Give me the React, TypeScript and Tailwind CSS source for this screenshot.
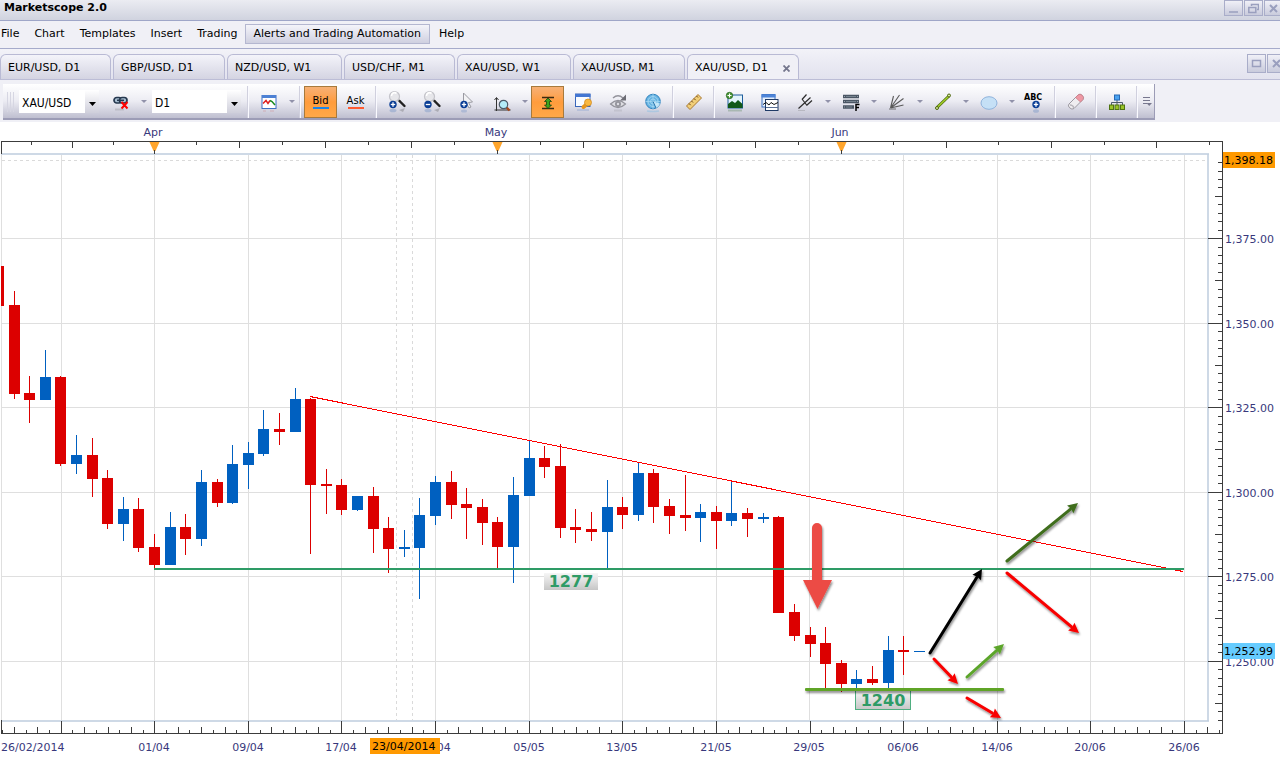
import { useState, type ReactNode } from "react";

type Candle = {
  high: number;
  low: number;
  top: number;
  bottom: number;
  up: boolean;
};

const c = (high: number, low: number, top: number, bottom: number, up = false): Candle => ({
  high,
  low,
  top,
  bottom,
  up,
});

const candles: Candle[] = [
  c(266, 306, 266, 306),
  c(291, 399, 305, 394),
  c(376, 423, 393, 400),
  c(350, 400, 377, 400, true),
  c(376, 466, 377, 464),
  c(435, 474, 455, 464, true),
  c(438, 497, 455, 479),
  c(470, 529, 478, 524),
  c(497, 541, 509, 524, true),
  c(498, 552, 509, 548),
  c(534, 569, 547, 565),
  c(512, 565, 527, 565, true),
  c(514, 555, 527, 539),
  c(470, 546, 482, 539, true),
  c(479, 507, 482, 503),
  c(445, 504, 464, 503, true),
  c(442, 489, 453, 465, true),
  c(410, 456, 429, 454, true),
  c(413, 445, 429, 432),
  c(388, 432, 399, 432, true),
  c(398, 554, 399, 485),
  c(469, 514, 484, 486),
  c(479, 515, 485, 510),
  c(496, 511, 496, 510, true),
  c(487, 553, 496, 529),
  c(517, 573, 528, 549),
  c(530, 557, 547, 549, true),
  c(498, 599, 515, 548, true),
  c(476, 525, 482, 516, true),
  c(471, 519, 482, 505),
  c(488, 539, 504, 508),
  c(499, 545, 507, 523),
  c(517, 568, 522, 547),
  c(477, 583, 495, 547, true),
  c(440, 496, 458, 496, true),
  c(446, 478, 458, 467),
  c(444, 538, 466, 528),
  c(509, 543, 527, 530),
  c(512, 541, 529, 532),
  c(480, 568, 507, 532, true),
  c(497, 529, 507, 515),
  c(463, 521, 473, 515, true),
  c(469, 523, 473, 507),
  c(499, 534, 506, 516),
  c(475, 531, 515, 518),
  c(504, 542, 512, 518, true),
  c(506, 549, 512, 521),
  c(481, 526, 513, 521, true),
  c(508, 537, 513, 519),
  c(513, 523, 517, 519, true),
  c(516, 613, 517, 613),
  c(604, 641, 612, 636),
  c(627, 657, 635, 644),
  c(627, 690, 643, 664),
  c(660, 692, 663, 684),
  c(670, 688, 679, 684, true),
  c(666, 685, 679, 683),
  c(636, 688, 650, 683, true),
  c(636, 675, 650, 652),
  c(651, 652, 651, 652, true),
];

const barX = (i: number) => Math.round(-1.95 + 15.605 * i);

const dates = [
  { x: 154, text: "01/04" },
  { x: 248, text: "09/04" },
  { x: 341, text: "17/04" },
  { x: 435, text: "25/04" },
  { x: 529, text: "05/05" },
  { x: 622, text: "13/05" },
  { x: 716, text: "21/05" },
  { x: 809, text: "29/05" },
  { x: 903, text: "06/06" },
  { x: 997, text: "14/06" },
  { x: 1090, text: "20/06" },
  { x: 1184, text: "26/06" },
];

const prices = [
  { y: 238, text: "1,375.00" },
  { y: 323, text: "1,350.00" },
  { y: 407, text: "1,325.00" },
  { y: 492, text: "1,300.00" },
  { y: 576, text: "1,275.00" },
  { y: 661, text: "1,250.00" },
];

const months = [
  { x: 154, text: "Apr" },
  { x: 497, text: "May" },
  { x: 841, text: "Jun" },
];

const topSmall = [31, 113, 196, 282, 368, 454, 540, 626, 712, 798, 893, 998, 1104, 1209];
const topMedium = [72, 239, 325, 411, 583, 669, 755, 946, 1051, 1156];

const tabs = [
  { name: "EUR/USD, D1", width: "w-[111px]" },
  { name: "GBP/USD, D1", width: "w-[112px]" },
  { name: "NZD/USD, W1", width: "w-[115px]" },
  { name: "USD/CHF, M1", width: "w-[111px]" },
  { name: "XAU/USD, W1", width: "w-[114px]" },
  { name: "XAU/USD, M1", width: "w-[112px]" },
  { name: "XAU/USD, D1", width: "w-[112px]" },
];

const menu = ["File", "Chart", "Templates", "Insert", "Trading", "Alerts and Trading Automation", "Help"];

/* ---------- toolbar ---------- */

function Icon({ children }: { children: ReactNode }) {
  return (
    <svg width="24" height="24" viewBox="0 0 24 24" fill="none" className="shrink-0">
      {children}
    </svg>
  );
}

function Tool({ label, active, children }: { label: string; active?: boolean; children: ReactNode }) {
  return (
    <button
      type="button"
      aria-label={label}
      aria-pressed={active}
      className={
        active
          ? "mx-px flex h-8 w-[33px] shrink-0 flex-col items-center justify-center border border-[#a87a3c] bg-linear-to-b from-[#f6b074] via-[#ff9c3c] to-[#ffa848]"
          : "flex h-8 w-[35px] shrink-0 flex-col items-center justify-center"
      }
    >
      {children}
    </button>
  );
}

function Caret({ label }: { label: string }) {
  return (
    <button type="button" aria-label={label} className="flex h-8 w-[11px] shrink-0 items-center justify-center">
      <svg width="6" height="3" viewBox="0 0 6 3">
        <path d="M0 0h6L3 3z" fill="#9192aa" />
      </svg>
    </button>
  );
}

function Divider() {
  return (
    <div className="flex h-full w-1.5 shrink-0 justify-center">
      <div className="w-px bg-[#d0d0de]" />
      <div className="w-px bg-[#fafaff]" />
    </div>
  );
}

function Combo({ label, value, options, width }: { label: string; value: string; options: string[]; width: string }) {
  return (
    <div className={"relative h-[23px] shrink-0 bg-white " + width}>
      <select
        aria-label={label}
        defaultValue={value}
        className="h-full w-full appearance-none bg-transparent pl-[3px] font-['DejaVu_Sans_Condensed','DejaVu_Sans',sans-serif] text-[12px] leading-[15px] text-black"
      >
        {options.map((o) => (
          <option key={o}>{o}</option>
        ))}
      </select>
      <span className="pointer-events-none absolute inset-y-0 right-0 flex w-3.5 items-center justify-center bg-linear-to-b from-white to-[#cfcfdb]">
        <svg width="7" height="4" viewBox="0 0 7 4" className="mt-1">
          <path d="M0 0h7L3.5 4z" fill="#000" />
        </svg>
      </span>
    </div>
  );
}

function Badge({ x, y, minus }: { x: number; y: number; minus?: boolean }) {
  return (
    <g>
      <circle cx={x} cy={y} r="3.7" fill="#0c3f96" />
      <path d={`M${x - 2.2} ${y}h4.4`} stroke="#fff" strokeWidth="1.3" />
      {!minus && <path d={`M${x} ${y - 2.2}v4.4`} stroke="#fff" strokeWidth="1.3" />}
    </g>
  );
}

function ZoomIcon({ minus }: { minus?: boolean }) {
  return (
    <Icon>
      <ellipse cx="8" cy="20.5" rx="3.5" ry="1.8" fill="#6f8fc4" opacity=".4" />
      <path d="M14 20l6-2-2 4z" fill="#555" opacity=".3" />
      <path d="M12.5 9.5l3 2" stroke="#aaa" strokeWidth="2.4" />
      <path d="M14.5 11l5 5" stroke="#222" strokeWidth="2.4" strokeLinecap="round" />
      <circle cx="9.5" cy="6.5" r="5" fill="#e6e6ea" stroke="#c4c4ca" strokeWidth="1.2" />
      <path d="M6.5 6a3 3 0 0 1 5-2.500" stroke="#fff" strokeWidth="1.6" />
      <Badge x={8} y={14.5} minus={minus} />
    </Icon>
  );
}

function Toolbar() {
  return (
    <div
      role="toolbar"
      className="flex h-9 w-[1152px] shrink-0 items-center border-r border-b-2 border-[#9c9cb6] bg-linear-to-b from-white via-[#ececf3] to-[#bfbfd0] pt-0.5"
    >
      <div className="mr-[5px] ml-1 flex h-5 w-[7px] shrink-0 justify-between">
        <div className="w-px bg-[#d6d6e2]" />
        <div className="w-px bg-[#d6d6e2]" />
        <div className="w-px bg-[#d6d6e2]" />
      </div>
      <Combo label="Symbol" value="XAU/USD" options={["XAU/USD", "EUR/USD", "GBP/USD"]} width="mr-1 w-20" />
      <Tool label="Unlink symbol">
        <Icon>
          <rect x="5" y="7.5" width="7.500" height="5.500" rx="2.700" fill="#a9bfd2" stroke="#26384f" strokeWidth="1.700" />
          <rect x="10.500" y="7.500" width="7.500" height="5.500" rx="2.700" fill="#a9bfd2" stroke="#26384f" strokeWidth="1.700" />
          <path d="M8 10.300h7" stroke="#26384f" strokeWidth="1.500" />
          <path d="M6 19.500h9" stroke="#777" strokeWidth="2" opacity=".25" />
          <path d="M12.500 12l6 6.500M18.500 12l-6 6.500" stroke="#f00" strokeWidth="2" />
        </Icon>
      </Tool>
      <Caret label="Link options" />
      <Combo label="Period" value="D1" options={["D1", "W1", "M1"]} width="mr-1 ml-[3px] w-[89px]" />
      <Divider />
      <Tool label="Chart type">
        <Icon>
          <rect x="5" y="5.500" width="14" height="13" fill="#fff" stroke="#3c6fc4" />
          <path d="M5 6.500h14" stroke="#4c80d4" strokeWidth="3" />
          <path d="M6 13.500l3-3 2 3 2-3" stroke="#e02020" strokeWidth="1.500" />
          <path d="M13 10.500l2 1 3 3.500" stroke="#168a1c" strokeWidth="1.500" />
          <path d="M6 21h3M13 21h4" stroke="#c66" opacity=".35" />
        </Icon>
      </Tool>
      <Caret label="Chart types" />
      <Divider />
      <Tool label="Bid" active>
        <span className="text-[10px] leading-[12px] text-black">Bid</span>
        <span className="h-0.5 w-4 bg-[#1a85e8]" />
      </Tool>
      <Tool label="Ask">
        <span className="text-[10px] leading-[12px] text-black">Ask</span>
        <span className="h-0.5 w-4 bg-[#ff5a30]" />
      </Tool>
      <Divider />
      <Tool label="Zoom in">
        <ZoomIcon />
      </Tool>
      <Tool label="Zoom out">
        <ZoomIcon minus />
      </Tool>
      <Tool label="Cursor">
        <Icon>
          <path d="M8.500 3l9 9-4 .500 2.500 4.500-2 1-2.500-4.500-3 2.500z" fill="#f2f2f4" stroke="#9a9aa2" />
          <Badge x={9} y={14.500} />
          <ellipse cx="9" cy="21" rx="3" ry="1.500" fill="#6f8fc4" opacity=".35" />
        </Icon>
      </Tool>
      <Tool label="Zoom area">
        <Icon>
          <path d="M6.500 8v13M4.500 10L6.500 7.500 8.500 10M4.500 20h16" stroke="#333" />
          <path d="M16.500 17.500l3 3" stroke="#a8481c" strokeWidth="2.400" />
          <circle cx="13.500" cy="14.500" r="4.200" fill="#b4ecf8" stroke="#4c5a68" strokeWidth="1.200" />
        </Icon>
      </Tool>
      <Caret label="Zoom modes" />
      <Tool label="Auto scale" active>
        <Icon>
          <path d="M6 7.500h12M6 18.500h12" stroke="#3c2a10" strokeWidth="1.400" />
          <path d="M12 8l3.500 3.500h-2v3.500h2L12 18.500 8.500 15h2v-3.500h-2z" fill="#3aa51c" stroke="#17440c" strokeWidth=".8" />
        </Icon>
      </Tool>
      <Tool label="Chart properties">
        <Icon>
          <rect x="4.500" y="4" width="14.500" height="12.500" fill="#f8fbff" stroke="#3a66ba" />
          <path d="M4 5.500h15.500" stroke="#4376d2" strokeWidth="3" />
          <path d="M6 20h12" stroke="#8fa4cf" strokeWidth="2" opacity=".4" />
          <path d="M12.500 17l3-2.500" stroke="#e8961c" strokeWidth="4" strokeLinecap="round" />
          <circle cx="17" cy="12.500" r="3.500" fill="#f9b840" stroke="#d08a20" strokeWidth=".8" />
        </Icon>
      </Tool>
      <Tool label="Refresh view">
        <Icon>
          <path d="M4.500 14q7.500-7 15 0q-7.500 7-15 0z" fill="#dcdce1" stroke="#93939b" strokeWidth="1.200" />
          <circle cx="12" cy="14" r="3" fill="#94949c" />
          <circle cx="12" cy="14" r="1.200" fill="#dedee4" />
          <path d="M7 8q5-4.500 10 0" stroke="#93939b" strokeWidth="1.400" />
          <path d="M20 4.500v6h-6z" fill="#6c6c74" />
          <path d="M8 20.500h8" stroke="#93939b" strokeWidth="2" opacity=".25" />
        </Icon>
      </Tool>
      <Tool label="Market data">
        <Icon>
          <circle cx="12" cy="11.500" r="7.300" fill="#67b3e2" stroke="#3385bf" />
          <circle cx="12" cy="11.500" r="5" stroke="#a9daf3" strokeWidth=".8" />
          <circle cx="12" cy="11.500" r="2.500" stroke="#a9daf3" strokeWidth=".8" />
          <path d="M12 4v15M4.500 11.500h15" stroke="#a9daf3" strokeWidth=".7" />
          <path d="M12 11.500l7 2a7.300 7.300 0 0 1-4 5z" fill="#d6effb" opacity=".8" />
          <path d="M12 11.500l3 6.500" stroke="#2471aa" />
          <path d="M6 21q6 1 12 0" stroke="#6db6e4" strokeWidth="1.500" opacity=".35" />
        </Icon>
      </Tool>
      <Divider />
      <Tool label="Ruler">
        <Icon>
          <path d="M4.500 16L16 4.500l3.500 3.500L8 19.500z" fill="#f2cf78" stroke="#a87830" />
          <path d="M7 13.500l1.700 1.700M9.500 11l1.500 1.500M12 8.500l1.700 1.700M14.500 6l1.500 1.500" stroke="#6a4614" />
        </Icon>
      </Tool>
      <Divider />
      <Tool label="Add image">
        <Icon>
          <rect x="5" y="5" width="14.500" height="13" fill="#e4f4fb" stroke="#1d5d9c" />
          <path d="M5 18v-4l4-3 3 2 3-3 4.500 4v4z" fill="#125818" />
          <circle cx="6.500" cy="5.500" r="3.200" fill="#4f9a3c" stroke="#1d5d18" strokeWidth=".7" />
          <path d="M4.500 5.500h4M6.500 3.500v4" stroke="#fff" />
          <path d="M5 20.500h14" stroke="#4a7a4a" strokeWidth="2" opacity=".3" />
        </Icon>
      </Tool>
      <Tool label="Add indicator">
        <Icon>
          <rect x="4" y="4.500" width="13" height="12.500" fill="#e6effb" stroke="#3d72c4" />
          <path d="M3.500 6h14" stroke="#4d84d8" strokeWidth="3" />
          <rect x="7.500" y="9.500" width="12.500" height="11" fill="#fff" stroke="#1f3a66" />
          <path d="M5 14.500l3-2 3 2.500 2-2.500 3 2 4-2" stroke="#111" />
          <path d="M8 17.500h12" stroke="#5a6f94" />
        </Icon>
      </Tool>
      <Tool label="Pitchfork">
        <Icon>
          <path d="M5.500 18.500l12-11M9 9.500l4.500-5M13.500 15.500l5.500-5M9 9l5 6.500" stroke="#2c2c2c" strokeWidth="1.200" />
          <path d="M5 20.500h7" stroke="#888" opacity=".35" />
        </Icon>
      </Tool>
      <Caret label="Pitchforks" />
      <Tool label="Fibonacci">
        <Icon>
          <path d="M4 6.500h16M4 11.500h16M4 17h11" stroke="#4a5664" strokeWidth="3.400" />
          <path d="M5 6.500h14M5 11.500h14M5 17h9" stroke="#aeb8c2" strokeWidth=".8" strokeDasharray="1 12" />
          <path d="M7 6.500h10M7 11.500h10M7 17h6" stroke="#8a96a2" strokeWidth=".7" />
          <path d="M17 21v-6.500h3.500M17 17.500h3" stroke="#000" strokeWidth="1.500" />
        </Icon>
      </Tool>
      <Caret label="Fibonacci tools" />
      <Tool label="Fan">
        <Icon>
          <path d="M5.500 18L8.500 6M5.500 18l9-13M5.500 18L18.500 8.500M5.500 18l13-3" stroke="#5a5a5a" strokeWidth="1.100" />
          <path d="M4 19h7" stroke="#555" strokeWidth="2" opacity=".4" />
        </Icon>
      </Tool>
      <Caret label="Fans" />
      <Tool label="Line">
        <Icon>
          <path d="M6 17.500L18 6" stroke="#4d6a10" strokeWidth="3" />
          <path d="M6 17.500L18 6" stroke="#a0cc28" strokeWidth="1.700" />
          <circle cx="6" cy="18" r="1.500" fill="#d8eea0" stroke="#4d6410" />
          <circle cx="18" cy="5.500" r="1.500" fill="#d8eea0" stroke="#4d6410" />
        </Icon>
      </Tool>
      <Caret label="Lines" />
      <Tool label="Ellipse">
        <Icon>
          <ellipse cx="12" cy="13" rx="8" ry="6.300" fill="#c5e0f6" stroke="#8fb3dc" />
        </Icon>
      </Tool>
      <Caret label="Shapes" />
      <Tool label="Text label">
        <Icon>
          <text x="1" y="10" fontSize="8" fontWeight="bold" fill="#000">
            ABC
          </text>
          <Badge x={13} y={14.500} />
          <ellipse cx="13" cy="21" rx="3" ry="1.800" fill="#6f8fc4" opacity=".4" />
        </Icon>
      </Tool>
      <Divider />
      <Tool label="Eraser">
        <Icon>
          <path d="M5 14L14 5q2-1.800 4.200.3t.8 4.200L10 18.500q-2 1.500-4.300-.6T5 14z" fill="#efedf0" stroke="#9a979f" />
          <path d="M11.500 7.500L14 5q2-1.800 4.200.3t.8 4.200L16.500 12z" fill="#ee98a4" stroke="#c87884" strokeWidth=".7" />
          <path d="M6 15q3 0 4 3" stroke="#b8b5bc" strokeWidth="1.500" />
        </Icon>
      </Tool>
      <Divider />
      <Tool label="Object tree">
        <Icon>
          <path d="M12 8v5M6.500 16v-3.500h11V16M12 12v4" stroke="#4c5b6b" />
          <rect x="9.500" y="5" width="5" height="5" fill="#4aa2f0" stroke="#2668b4" />
          <rect x="4.500" y="15" width="4" height="4.500" fill="#9ac428" stroke="#4f7410" />
          <rect x="10" y="15" width="4" height="4.500" fill="#9ac428" stroke="#4f7410" />
          <rect x="15.500" y="15" width="4" height="4.500" fill="#9ac428" stroke="#4f7410" />
        </Icon>
      </Tool>
      <Divider />
      <button type="button" aria-label="Toolbar options" className="flex h-8 flex-1 items-center justify-center">
        <svg width="9" height="9" viewBox="0 0 9 9">
          <path d="M0 .5h7M0 3.500h7M0 6.500h4" stroke="#77778e" />
          <path d="M3.500 6H9L6.200 9z" fill="#77778e" />
        </svg>
      </button>
    </div>
  );
}

/* ---------- window chrome ---------- */

function WindowButton({ label, children }: { label: string; children: ReactNode }) {
  return (
    <button
      type="button"
      aria-label={label}
      className="flex h-full w-[19px] shrink-0 items-center justify-center border border-[#a9adc9] bg-linear-to-b from-[#f0f0f7] to-[#c9cbdc]"
    >
      <svg width="11" height="11" viewBox="0 0 11 11" fill="none" stroke="#9a9fbe" strokeWidth="1.500">
        {children}
      </svg>
    </button>
  );
}

function Header() {
  const [active, setActive] = useState(6);
  return (
    <header className="bg-[#f0f0f6]">
      <div className="flex h-[21px] justify-between overflow-hidden border-b border-[#9fa6c8] bg-linear-to-b from-[#ebecf2] to-[#d0d3df]">
        <h1 className="pl-1 text-[11px] leading-[15px] font-bold text-black">Marketscope 2.0</h1>
        <div className="-mr-[3px] flex h-4 gap-px">
          <WindowButton label="Minimize">
            <path d="M1 9h9" />
          </WindowButton>
          <WindowButton label="Restore">
            <path d="M3.500 3V1.500h7v5H9M.8 4.500h7v5h-7z" />
          </WindowButton>
          <WindowButton label="Close">
            <path d="M2 2l7 7M9 2L2 9" strokeWidth="2" />
          </WindowButton>
        </div>
      </div>
      <nav className="flex h-7 items-center gap-[3px] border-b border-[#a6abcb] pb-0.5">
        {menu.map((item) => (
          <button
            key={item}
            type="button"
            className={
              item.startsWith("Alerts")
                ? "-ml-0.5 h-5 border border-[#b4b7d0] bg-linear-to-b from-[#f4f4fa] to-[#cfd0e0] px-2 text-[11px] leading-[14px] text-black"
                : "h-5 px-1.5 text-[11px] leading-[14px] text-black first:pl-px"
            }
          >
            {item}
          </button>
        ))}
      </nav>
      <div className="flex h-[31px] justify-between overflow-hidden border-b border-[#bcbdd6] bg-linear-to-b from-[#f2f2f8] to-[#e2e2ee]">
        <div role="tablist" className="flex items-end gap-0.5">
          {tabs.map((t, i) => (
            <div
              key={t.name}
              className={
                (i === active
                  ? "-mb-px h-[26px] bg-[#f0f0f6] "
                  : "h-[25px] bg-linear-to-b from-[#f4f4fa] to-[#d4d4e2] ") +
                "flex items-center rounded-t-md border border-b-0 border-[#b9bad4] pt-px pl-[7px] " +
                t.width
              }
            >
              <button
                type="button"
                role="tab"
                aria-selected={i === active}
                onClick={() => setActive(i)}
                className="text-[11px] leading-[14px] whitespace-nowrap text-black"
              >
                {t.name}
              </button>
              {i === active && (
                <button type="button" aria-label="Close tab" className="mr-1 ml-auto p-1">
                  <svg width="7" height="7" viewBox="0 0 7 7" stroke="#74768c" strokeWidth="1.800">
                    <path d="M.5.5l6 6M6.500.5l-6 6" />
                  </svg>
                </button>
              )}
            </div>
          ))}
        </div>
        <div className="mt-[5px] -mr-[6px] flex h-[19px] gap-px">
          <WindowButton label="Maximize chart">
            <path d="M1.500 2.500h8v6h-8z" />
          </WindowButton>
          <WindowButton label="Close chart">
            <path d="M2 2l7 7M9 2L2 9" strokeWidth="2" />
          </WindowButton>
        </div>
      </div>
      <div className="flex h-[42px] items-center pt-px pl-[3px]">
        <Toolbar />
      </div>
    </header>
  );
}

/* ---------- chart ---------- */

type ArrowProps = { x1: number; y1: number; x2: number; y2: number; color: string };

function Arrow({ x1, y1, x2, y2, color }: ArrowProps) {
  const len = Math.hypot(x2 - x1, y2 - y1);
  const ux = (x2 - x1) / len;
  const uy = (y2 - y1) / len;
  const bx = x2 - ux * 10;
  const by = y2 - uy * 10;
  return (
    <g filter="url(#shadow)">
      <line x1={x1} y1={y1} x2={bx} y2={by} stroke={color} strokeWidth="3" strokeLinecap="round" />
      <polygon
        points={`${x2},${y2} ${bx - uy * 5},${by + ux * 5} ${bx + ux},${by + uy} ${bx + uy * 5},${by - ux * 5}`}
        fill={color}
      />
    </g>
  );
}

function Axes() {
  const bottomTicks = Array.from({ length: 105 }, (_, i) => i - 5);
  const rightTicks = Array.from({ length: 67 }, (_, i) => i - 9);
  return (
    <g fill="#3c3c3c" shapeRendering="crispEdges">
      <rect x="1" y="141" width="1222" height="1" />
      <rect x="1" y="141" width="1" height="13" />
      <rect x="1" y="733" width="1222" height="1" />
      <rect x="1" y="720" width="1" height="13" />
      <rect x="1222" y="141" width="1" height="593" />
      {topSmall.map((x) => (
        <rect key={x} x={x} y="142" width="1" height="3" />
      ))}
      {topMedium.map((x) => (
        <rect key={x} x={x} y="142" width="1" height="6" />
      ))}
      {bottomTicks.map((k) => {
        const h = k % 8 === 0 ? 12 : k % 2 === 0 ? 6 : 3;
        return <rect key={k} x={Math.floor(61.2 + 11.7 * k)} y={733 - h} width="1" height={h} />;
      })}
      {rightTicks.map((k) => {
        const w = k >= 0 && k % 10 === 0 ? 14 : k % 5 === 0 ? 7 : 4;
        return <rect key={k} x={1222 - w} y={Math.floor(238.6 + 8.45 * k)} width={w} height="1" />;
      })}
    </g>
  );
}

function Chart() {
  return (
    <svg
      viewBox="0 122 1280 635"
      className="block w-full bg-white font-['DejaVu_Sans',Verdana,sans-serif] text-[11px]"
      role="img"
      aria-label="XAU/USD daily chart"
    >
      <defs>
        <linearGradient id="tag" x1="0" y1="0" x2="0" y2="1">
          <stop offset="0" stopColor="#f6f6f6" />
          <stop offset="1" stopColor="#c6c6c6" />
        </linearGradient>
        <filter id="shadow" filterUnits="userSpaceOnUse" x="780" y="480" width="340" height="260">
          <feDropShadow dx="1" dy="2" stdDeviation="1.2" floodColor="#000" floodOpacity=".45" />
        </filter>
        <clipPath id="plot">
          <rect x="1" y="154" width="1207" height="567" />
        </clipPath>
      </defs>

      <g fill="#dfdfdf" shapeRendering="crispEdges">
        <rect x="1" y="155" width="1" height="565" />
        {[61, ...dates.map((d) => d.x)].map((x) => (
          <rect key={x} x={x} y="155" width="1" height="565" />
        ))}
        {prices.map((p) => (
          <rect key={p.y} x="2" y={p.y} width="1206" height="1" />
        ))}
      </g>
      <g stroke="#dadada" strokeDasharray="3 3" shapeRendering="crispEdges">
        <path d="M396.5 155v565M412.5 155v565M2 160.5h1205" />
      </g>
      <g fill="#c2cfe0" shapeRendering="crispEdges">
        <rect x="1" y="153" width="1208" height="2" opacity=".8" />
        <rect x="1" y="720" width="1208" height="2" opacity=".8" />
        <rect x="1207" y="154" width="2" height="567" opacity=".8" />
      </g>

      <Axes />

      {months.map((m) => (
        <g key={m.text}>
          <text x={m.x - 1} y="136" textAnchor="middle" fill="#38387c">
            {m.text}
          </text>
          <path d={`M${m.x - 4.5} 142h10l-4 9h-2z`} fill="#ffa52c" />
          <rect x={m.x} y="150" width="1" height="4" fill="#3c3c3c" />
        </g>
      ))}

      <g clipPath="url(#plot)" shapeRendering="crispEdges">
        {candles.map((k, i) => (
          <g key={i} fill={k.up ? "#0060c0" : "#dc0000"}>
            <rect x={barX(i)} y={k.high} width="1" height={k.low - k.high} />
            <rect x={barX(i) - 5} y={k.top} width="11" height={k.bottom - k.top} />
          </g>
        ))}
      </g>

      <path d="M310 396.500L1183 571.500" stroke="#f00" shapeRendering="crispEdges" />
      <rect x="154" y="568" width="1030" height="2" fill="#2e9b66" />

      <rect x="544" y="573" width="54" height="17" fill="url(#tag)" />
      <text x="571" y="587" textAnchor="middle" fontSize="16" fontWeight="bold" fill="#2e9b66">
        1277
      </text>
      <rect x="855.5" y="690.5" width="55" height="19" fill="url(#tag)" stroke="#4fae80" />
      <text x="883" y="706" textAnchor="middle" fontSize="16" fontWeight="bold" fill="#2e9b66">
        1240
      </text>

      <rect x="805" y="688" width="199" height="3" rx="1" fill="#5fa425" filter="url(#shadow)" />
      <path
        d="M812 528a5 5 0 0 1 10 0V580H832L817.500 609 803 580H812z"
        fill="#ec4b45"
        filter="url(#shadow)"
      />
      <Arrow x1={930} y1={653} x2={982} y2={569} color="#000" />
      <Arrow x1={1007} y1={561} x2={1078} y2={503} color="#3f6e1e" />
      <Arrow x1={1007} y1={573} x2={1079} y2={633} color="#f80000" />
      <Arrow x1={934} y1={659} x2={958} y2={684} color="#f80000" />
      <Arrow x1={967} y1={677} x2={1004} y2={644} color="#5ca52a" />
      <Arrow x1={967} y1={698} x2={1001} y2={718} color="#f80000" />

      <g fill="#38387c">
        <text x="1" y="751">
          26/02/2014
        </text>
        {dates.map((d) => (
          <text key={d.x} x={d.x} y="751" textAnchor="middle">
            {d.text}
          </text>
        ))}
        {prices.map((p) => (
          <text key={p.y} x="1225" y={p.y + 5}>
            {p.text}
          </text>
        ))}
      </g>

      <rect x="370" y="738" width="70" height="16" fill="#ff9900" />
      <text x="372" y="750" fill="#000">
        23/04/2014
      </text>
      <rect x="1223" y="152" width="52" height="16" fill="#ff9900" />
      <text x="1224" y="164" fill="#000">
        1,398.18
      </text>
      <rect x="1223" y="643" width="52" height="16" fill="#66ccff" />
      <text x="1224" y="655" fill="#000">
        1,252.99
      </text>
    </svg>
  );
}

export default function App() {
  return (
    <div className="w-full overflow-hidden bg-white font-['DejaVu_Sans',Verdana,sans-serif]">
      <Header />
      <main>
        <Chart />
      </main>
    </div>
  );
}
